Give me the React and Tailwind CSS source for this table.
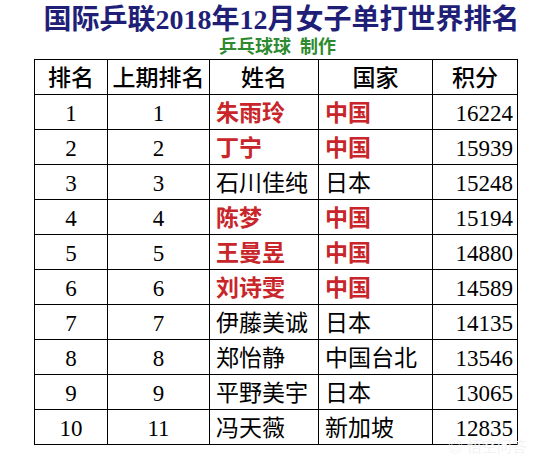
import React from 'react';

const rows = [
  { rank: 1, prev: 1, name: '朱雨玲', country: '中国', points: 16224, cn: true },
  { rank: 2, prev: 2, name: '丁宁', country: '中国', points: 15939, cn: true },
  { rank: 3, prev: 3, name: '石川佳纯', country: '日本', points: 15248 },
  { rank: 4, prev: 4, name: '陈梦', country: '中国', points: 15194, cn: true },
  { rank: 5, prev: 5, name: '王曼昱', country: '中国', points: 14880, cn: true },
  { rank: 6, prev: 6, name: '刘诗雯', country: '中国', points: 14589, cn: true },
  { rank: 7, prev: 7, name: '伊藤美诚', country: '日本', points: 14135 },
  { rank: 8, prev: 8, name: '郑怡静', country: '中国台北', points: 13546 },
  { rank: 9, prev: 9, name: '平野美宇', country: '日本', points: 13065 },
  { rank: 10, prev: 11, name: '冯天薇', country: '新加坡', points: 12835 },
];

const font = { fontFamily: '"Liberation Serif", "Noto Sans CJK SC", serif' };

const App = () => {
  return (
    <div className="relative w-[549px] h-[464px] bg-white overflow-hidden" style={font}>
      {/* 标题 */}
      <h1 className="mt-[6px] pl-[14px] text-center text-[28px] leading-[28px] font-bold text-[#1f1f78] whitespace-nowrap">
        国际乒联2018年12月女子单打世界排名
      </h1>
      <p className="mt-[4px] pl-[6px] text-center text-[18px] leading-[18px] font-bold text-[#2e8a2e]">
        乒乓球球&nbsp;&nbsp;制作
      </p>

      {/* 排名表 */}
      <table className="mt-[3px] ml-[34px] table-fixed border-collapse text-[23px] text-black">
        <colgroup>
          <col className="w-[73px]" />
          <col className="w-[102px]" />
          <col className="w-[109px]" />
          <col className="w-[114px]" />
          <col className="w-[85px]" />
        </colgroup>
        <thead>
          <tr className="h-[35px]">
            {['排名', '上期排名', '姓名', '国家', '积分'].map((h) => (
              <th key={h} className="border border-black p-0 pt-[2px] text-center font-medium leading-none whitespace-nowrap">
                {h}
              </th>
            ))}
          </tr>
        </thead>
        <tbody>
          {rows.map((r) => (
            <tr key={r.rank} className="h-[35px]">
              <td className="border border-black p-0 pt-[3px] text-center leading-none">{r.rank}</td>
              <td className="border border-black p-0 pt-[3px] text-center leading-none">{r.prev}</td>
              <td
                className={
                  r.cn
                    ? 'border border-black p-0 pl-[6px] pt-[3px] text-left leading-none whitespace-nowrap font-bold text-[#c8262a]'
                    : 'border border-black p-0 pl-[6px] pt-[3px] text-left leading-none whitespace-nowrap'
                }
              >
                {r.name}
              </td>
              <td
                className={
                  r.cn
                    ? 'border border-black p-0 pl-[6px] pt-[3px] text-left leading-none whitespace-nowrap font-bold text-[#c8262a]'
                    : 'border border-black p-0 pl-[6px] pt-[3px] text-left leading-none whitespace-nowrap'
                }
              >
                {r.country}
              </td>
              <td className="border border-black p-0 pr-[4px] pt-[3px] text-right leading-none">{r.points}</td>
            </tr>
          ))}
        </tbody>
      </table>

      {/* 水印 */}
      <div className="absolute left-[448px] top-[440px] text-[15px] leading-none text-[#f3f3f3] whitespace-nowrap">
        ◎ 悟空问答
      </div>
    </div>
  );
};

export default App;
